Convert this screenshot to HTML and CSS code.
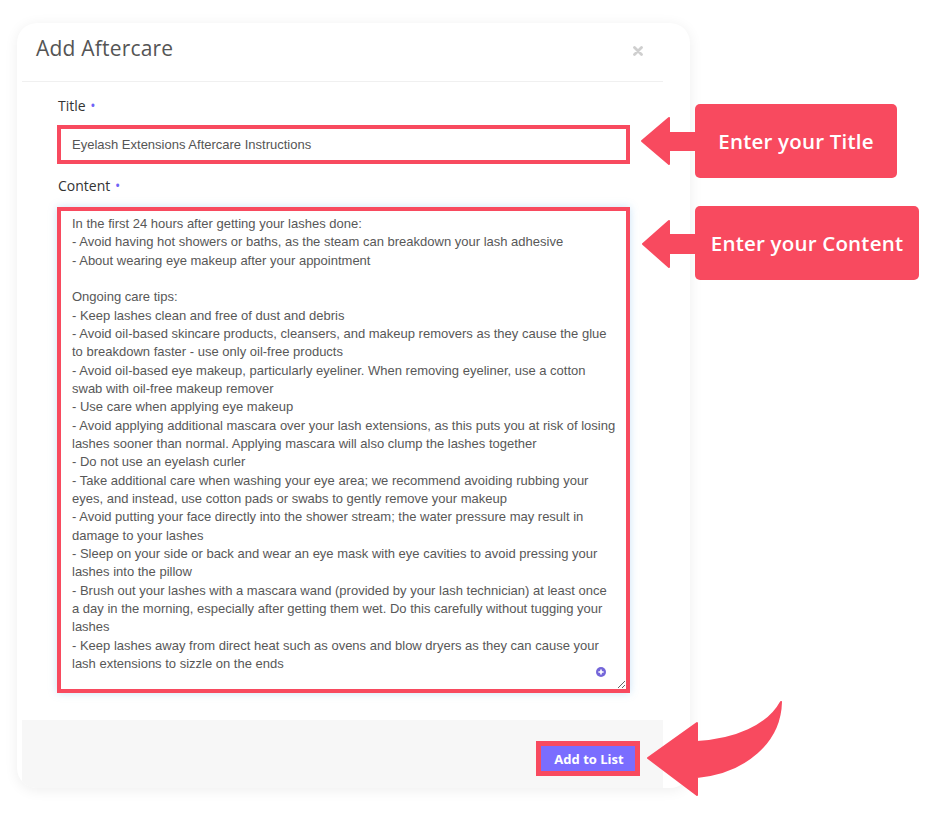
FILE: index.html
```html
<!DOCTYPE html>
<html lang="en">
<head>
<meta charset="utf-8">
<title>Add Aftercare</title>
<link rel="stylesheet" href="styles.css">
</head>
<body>
<div class="page">
  <div class="modal">
    <div class="modal-header">
      <h2 class="modal-title">Add Aftercare</h2>
      <span class="close" aria-label="Close">
        <svg width="10" height="10" viewBox="0 0 10 10"><path d="M1.5 1.5 L8.5 8.5 M8.5 1.5 L1.5 8.5" stroke="#cfcfcf" stroke-width="2.8" stroke-linecap="round"/></svg>
      </span>
    </div>
    <div class="modal-body">
      <label class="field-label">Title <span class="req">•</span></label>
      <input class="title-input" type="text" value="Eyelash Extensions Aftercare Instructions">
      <label class="field-label">Content <span class="req">•</span></label>
      <div class="area-wrap">
        <textarea class="content-input">In the first 24 hours after getting your lashes done:
- Avoid having hot showers or baths, as the steam can breakdown your lash adhesive
- About wearing eye makeup after your appointment

Ongoing care tips:
- Keep lashes clean and free of dust and debris
- Avoid oil-based skincare products, cleansers, and makeup removers as they cause the glue to breakdown faster - use only oil-free products
- Avoid oil-based eye makeup, particularly eyeliner. When removing eyeliner, use a cotton swab with oil-free makeup remover
- Use care when applying eye makeup
- Avoid applying additional mascara over your lash extensions, as this puts you at risk of losing lashes sooner than normal. Applying mascara will also clump the lashes together
- Do not use an eyelash curler
- Take additional care when washing your eye area; we recommend avoiding rubbing your eyes, and instead, use cotton pads or swabs to gently remove your makeup
- Avoid putting your face directly into the shower stream; the water pressure may result in damage to your lashes
- Sleep on your side or back and wear an eye mask with eye cavities to avoid pressing your lashes into the pillow
- Brush out your lashes with a mascara wand (provided by your lash technician) at least once a day in the morning, especially after getting them wet. Do this carefully without tugging your lashes
- Keep lashes away from direct heat such as ovens and blow dryers as they can cause your lash extensions to sizzle on the ends</textarea>
        <span class="g-icon">
          <svg width="10" height="10" viewBox="0 0 10 10"><circle cx="5" cy="5" r="5" fill="#7466d9"/><path d="M5 2.4 V7.6 M2.4 5 H7.6" stroke="#fff" stroke-width="1.6"/></svg>
        </span>
      </div>
    </div>
    <div class="modal-footer">
      <button class="add-btn" type="button">Add to List</button>
    </div>
  </div>
</div>

<div class="callout callout-title">Enter your Title</div>
<div class="callout callout-content">Enter your Content</div>

<svg class="arrows" width="930" height="818" viewBox="0 0 930 818">
  <g fill="#f84a5f" stroke="#f84a5f" stroke-width="2" stroke-linejoin="round">
    <polygon points="642,141 669,118 669,133 698,133 698,150 669,150 669,164"/>
    <polygon points="643,244 669,221 669,235 698,235 698,253 669,253 669,267"/>
    <path d="M648,758 L697,723 L697,742 C735,740 768,726 781,702 C780,742 746,772 697,777 L697,795 Z"/>
  </g>
</svg>
</body>
</html>
```

FILE: styles.css
```css
* { box-sizing: border-box; }

html, body {
  margin: 0;
  padding: 0;
  background: #ffffff;
}

body {
  width: 930px;
  height: 818px;
  overflow: hidden;
  position: relative;
  font-family: "Liberation Sans", Arial, sans-serif;
}

.page {
  padding: 23px 0 0 17px;
}

.modal {
  width: 673px;
  height: 765px;
  background: #ffffff;
  border-radius: 20px;
  box-shadow: 0 2px 14px rgba(0, 0, 0, 0.07);
  padding: 0 27px 0 5px;
  display: flex;
  flex-direction: column;
  overflow: hidden;
}

.modal-header {
  height: 59px;
  border-bottom: 1px solid #f0f0f0;
  display: flex;
  justify-content: space-between;
  align-items: flex-start;
  padding: 12px 20px 0 14px;
}

.modal-title {
  margin: 0;
  font-family: "Open Sans", "Noto Sans", sans-serif;
  font-weight: 500;
  font-size: 21px;
  letter-spacing: 0.2px;
  line-height: 26px;
  color: #555555;
}

.close {
  display: flex;
  margin-top: 11px;
}

.modal-body {
  padding: 15px 33px 0 35px;
  display: flex;
  flex-direction: column;
}

.field-label {
  font-family: "Open Sans", "Noto Sans", sans-serif;
  font-size: 14px;
  line-height: 18px;
  color: #333333;
  font-weight: 500;
  margin-bottom: 10px;
  padding-left: 1px;
}

.field-label + .area-wrap { margin-top: 2px; }

.req {
  color: #6f63f6;
  font-size: 14px;
  margin-left: 1px;
}

.title-input {
  width: 573px;
  height: 39px;
  border: 4px solid #f84a5f;
  padding: 0 11px;
  font-family: "Liberation Sans", Arial, sans-serif;
  font-size: 13px;
  color: #555555;
  background: #fff;
  outline: none;
  margin: 0 0 13px 0;
}

.area-wrap {
  position: relative;
  width: 573px;
  height: 486px;
}

.content-input {
  display: block;
  width: 573px;
  height: 486px;
  border: 4px solid #f84a5f;
  padding: 4px 9.5px 4px 11px;
  font-family: "Liberation Sans", Arial, sans-serif;
  font-size: 13px;
  line-height: 18.33px;
  color: #585858;
  background: #fff;
  outline: none;
  resize: vertical;
  overflow: hidden;
  box-shadow: 0 0 8px rgba(102, 175, 233, 0.35);
}

.g-icon {
  position: absolute;
  right: 24px;
  bottom: 16px;
  display: flex;
}

.modal-footer {
  flex: 1;
  margin-top: 27px;
  background: #f7f7f7;
  display: flex;
  justify-content: flex-end;
  align-items: flex-start;
  padding: 21px 23px 0 0;
}

.add-btn {
  width: 104px;
  height: 35px;
  border: 5px solid #f84a5f;
  background: #7a6dff;
  color: #ffffff;
  font-family: "Open Sans", "Noto Sans", sans-serif;
  font-weight: 700;
  font-size: 13px;
  padding: 0 0 0 2px;
  cursor: pointer;
}

.callout {
  position: absolute;
  height: 74px;
  background: #f84a5f;
  border-radius: 5px;
  color: #ffffff;
  font-family: "Open Sans", "Noto Sans", sans-serif;
  font-weight: 600;
  font-size: 20.5px;
  letter-spacing: 0.2px;
  display: flex;
  align-items: center;
  justify-content: center;
}

.callout-title {
  left: 695px;
  top: 104px;
  width: 202px;
}

.callout-content {
  left: 695px;
  top: 206px;
  width: 224px;
}

.arrows {
  position: absolute;
  left: 0;
  top: 0;
  pointer-events: none;
}
```
